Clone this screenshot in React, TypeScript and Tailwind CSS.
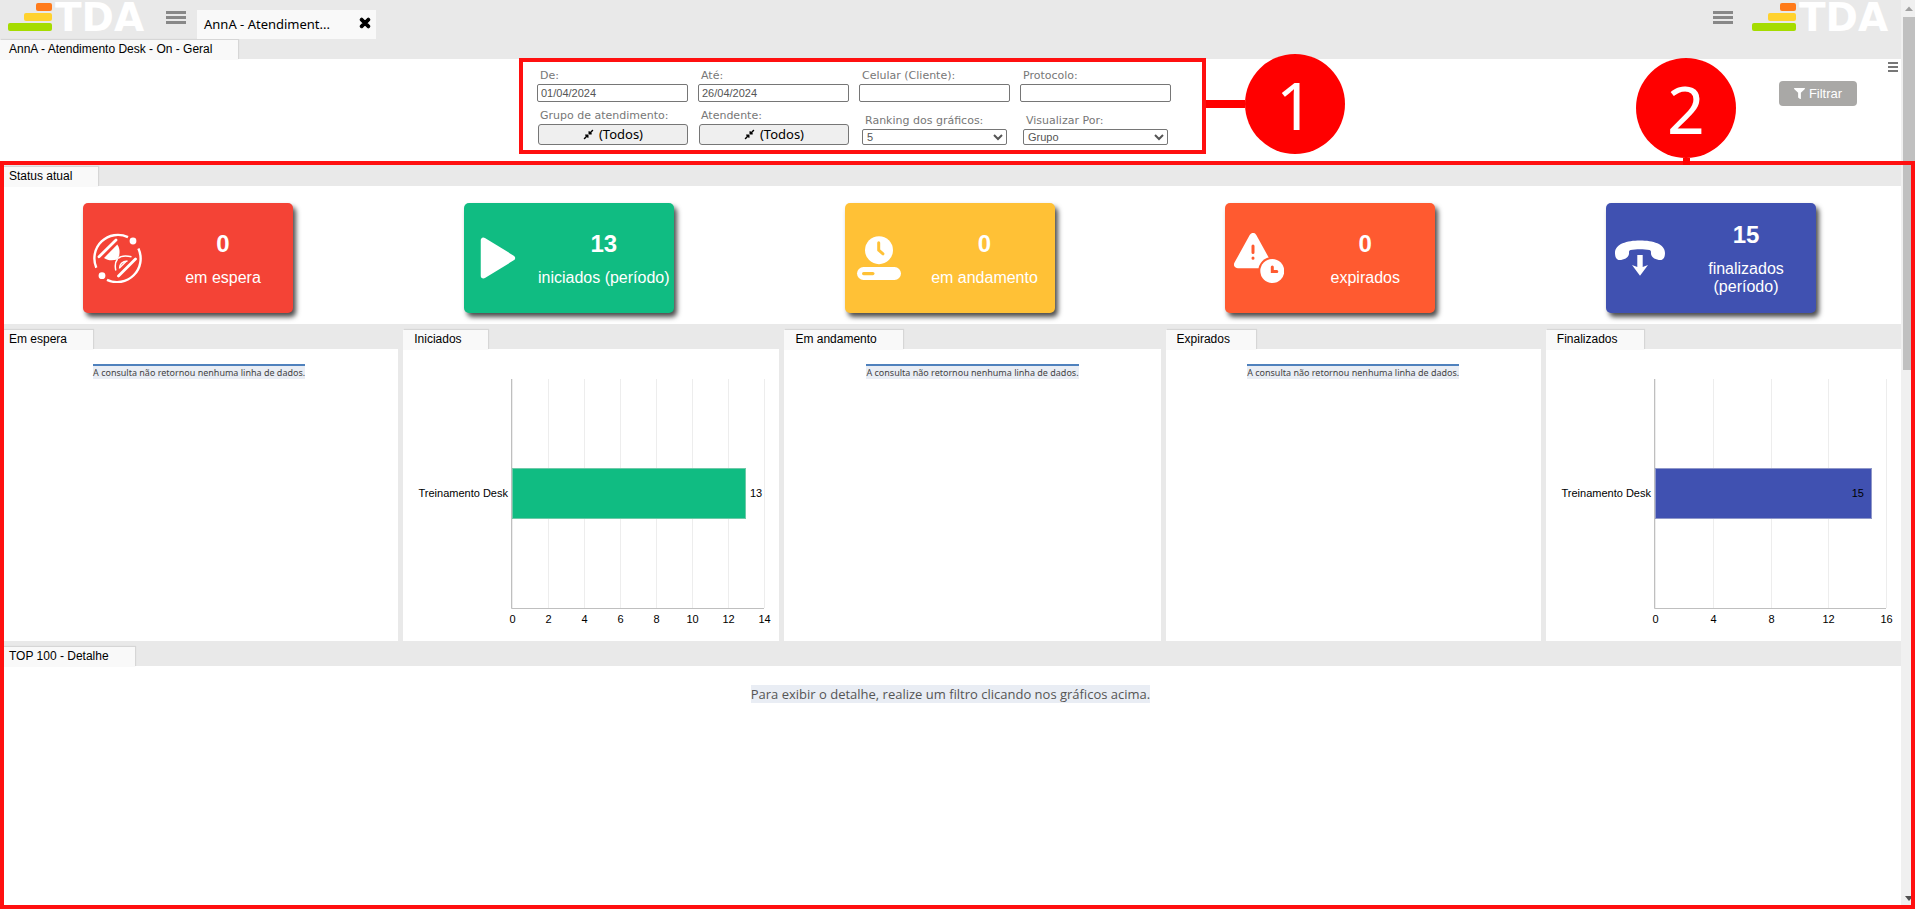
import { useState } from 'react'
import type { ReactNode } from 'react'
import { FaCompressAlt, FaFilter, FaTimes } from 'react-icons/fa'

type StatusCard = {
  value: number
  label: string
  color: string
  icon: ReactNode
}

type ChartData = {
  category: string
  value: number
  max: number
  step: number
  width: number
  color: string
  stroke: string
  labelInside?: boolean
}

type Panel = {
  title: string
  chart?: ChartData
}

const FIELD_LABEL = "pl-[3px] font-['DejaVu_Sans',sans-serif] text-[11px] leading-[15px] text-[#777]"

const STATUS_CARDS: StatusCard[] = [
  { value: 0, label: 'em espera', color: 'bg-[#f44336]', icon: <HourglassIcon /> },
  { value: 13, label: 'iniciados (período)', color: 'bg-[#10bc82]', icon: <PlayIcon /> },
  { value: 0, label: 'em andamento', color: 'bg-[#ffc136]', icon: <ProgressIcon /> },
  { value: 0, label: 'expirados', color: 'bg-[#ff5a30]', icon: <ExpiredIcon /> },
  { value: 15, label: 'finalizados (período)', color: 'bg-[#4051b1]', icon: <HangUpIcon /> },
]

const PANELS: Panel[] = [
  { title: 'Em espera' },
  {
    title: 'Iniciados',
    chart: { category: 'Treinamento Desk', value: 13, max: 14, step: 2, width: 252, color: '#10bc82', stroke: '#6fc9a8' },
  },
  { title: 'Em andamento' },
  { title: 'Expirados' },
  {
    title: 'Finalizados',
    chart: { category: 'Treinamento Desk', value: 15, max: 16, step: 4, width: 231, color: '#4051b1', stroke: '#8f97c9', labelInside: true },
  },
]

function HourglassIcon() {
  return (
    <svg viewBox="0 0 50 50" className="h-[50px] w-[50px]" fill="none" stroke="#fff">
      <path d="M4.3 34.7A23.5 23.5 0 0 1 36 4.2" strokeWidth="2.4" />
      <path d="M46.4 15.6A23.5 23.5 0 0 1 15 46.8" strokeWidth="2.4" />
      <circle cx="41" cy="8" r="3.4" fill="#fff" stroke="none" />
      <circle cx="10" cy="42.7" r="3.4" fill="#fff" stroke="none" />
      <path d="M7 23.8 24 7M26.5 43 43.5 26" strokeWidth="2.8" strokeLinecap="round" />
      <path d="M25.3 11.5C27.5 14.5 28 18.5 27.2 22.5L25.5 26.5C21 27.5 16 28 12 25Z" fill="#fff" stroke="none" />
      <path d="M26 25.5C29 22.5 34 22.5 39.5 23.7M25.5 26C22.8 29.5 22.8 33 23.8 37.5" strokeWidth="1.5" />
      <path d="M27.5 35.5C27.5 31.5 30.5 28.5 35.5 28" strokeWidth="1.4" />
      <path d="M28 34.5 34 28.5" strokeWidth="1.2" />
    </svg>
  )
}

function PlayIcon() {
  return (
    <svg viewBox="0 0 50 50" className="h-[50px] w-[50px]">
      <path d="M10.5 7.3V42.7L39.3 25Z" fill="#fff" stroke="#fff" strokeWidth="5.5" strokeLinejoin="round" />
    </svg>
  )
}

function ProgressIcon() {
  return (
    <svg viewBox="0 0 50 50" className="h-[50px] w-[50px]">
      <circle cx="25" cy="17.2" r="14" fill="#fff" />
      <path d="M24.7 9.8V17.2L29 20.8" fill="none" stroke="#ffc136" strokeWidth="3" strokeLinecap="round" strokeLinejoin="round" />
      <rect x="3" y="34" width="44" height="13" rx="6.5" fill="#fff" />
      <rect x="8" y="39" width="12.5" height="3.2" rx="1.6" fill="#ffc136" />
    </svg>
  )
}

function ExpiredIcon() {
  return (
    <svg viewBox="0 0 50 50" className="h-[50px] w-[50px]">
      <path d="M19 3.8 3.8 31.4H34.2Z" fill="#fff" stroke="#fff" strokeWidth="7.5" strokeLinejoin="round" />
      <path d="M19 13V19.5M19 25V25.2" stroke="#ff5a30" strokeWidth="3" strokeLinecap="round" />
      <circle cx="38.3" cy="38" r="14" fill="#ff5a30" />
      <circle cx="38.3" cy="38" r="12" fill="#fff" />
      <path d="M38.3 34V38.5H42.8" fill="none" stroke="#ff5a30" strokeWidth="3" strokeLinecap="round" />
    </svg>
  )
}

function HangUpIcon() {
  return (
    <svg viewBox="0 0 50 50" className="h-[50px] w-[50px]" fill="#fff">
      <path d="M0 20C0 11 12 7.6 25 7.6S50 11 50 20C50 24 48.5 27 45.5 27C41 27 36 24.5 36 20.5C36 18 36 17.5 34.5 17C29 16 21 16 15.5 17C14 17.5 14 18 14 20.5C14 24.5 9 27 4.5 27C1.5 27 0 24 0 20Z" />
      <path d="M22.3 22H27.7V34L33 32 25 42.7 17 32 22.3 34Z" />
    </svg>
  )
}

function Logo() {
  return (
    <svg width="138" height="42" viewBox="0 0 138 42" role="img" aria-label="TDA">
      <rect x="28" y="3" width="16" height="8" rx="2" fill="#ff7a1a" />
      <rect x="16" y="13" width="28" height="8" rx="2" fill="#ffd22e" />
      <rect y="23" width="44" height="8" rx="2" fill="#a5dc00" />
      <text x="47" y="31" fill="#fff" fontSize="39" fontWeight="700" fontFamily="'DejaVu Sans', sans-serif">
        TDA
      </text>
    </svg>
  )
}

function MenuButton() {
  return (
    <button type="button" aria-label="Menu" className="flex h-[13px] w-5 flex-col justify-between">
      <span className="h-[3px] w-full bg-[#888]" />
      <span className="h-[3px] w-full bg-[#888]" />
      <span className="h-[3px] w-full bg-[#888]" />
    </button>
  )
}

function TabStrip({ title, indent = 'pl-[9px]' }: { title: string; indent?: string }) {
  return (
    <div className="flex h-[25px] bg-[#e9e9e9] pt-[6px]">
      <h2 className={`h-5 bg-[#f9f9f9] pr-[26px] text-xs leading-[18px] text-black shadow-[1px_-1px_1px_rgba(0,0,0,0.08)] ${indent}`}>
        {title}
      </h2>
    </div>
  )
}

function BarChart({ chart }: { chart: ChartData }) {
  const { category, value, max, step, width, color, stroke, labelInside } = chart
  const left = 109
  const ticks = Array.from({ length: max / step + 1 }, (_, i) => i * step)
  const barWidth = Math.round((value / max) * width)

  return (
    <svg width={left + width + 14} height="292" fontSize="11" role="img" aria-label={`${category}: ${value}`}>
      {ticks.map((t) => {
        const x = left + Math.round((t / max) * width)
        return (
          <g key={t}>
            <line x1={x + 0.5} y1="30" x2={x + 0.5} y2="259" stroke="#ededed" />
            <text x={x + 0.5} y="274" textAnchor="middle">{t}</text>
          </g>
        )
      })}
      <path d={`M${left - 0.5} 30V259.5H${left + width}`} fill="none" stroke="#bfbfbf" />
      <rect x={left + 0.5} y="119.5" width={barWidth - 1} height="50" fill={color} stroke={stroke} />
      <text x={left - 4} y="148" textAnchor="end">{category}</text>
      <text x={left + barWidth + (labelInside ? -8 : 4)} y="148" textAnchor={labelInside ? 'end' : 'start'}>
        {value}
      </text>
    </svg>
  )
}

function Marker({ children }: { children: ReactNode }) {
  return (
    <span className="flex h-[100px] w-[100px] items-center justify-center rounded-full bg-[#f00] font-['Noto_Sans',sans-serif] text-[66px] leading-none text-white">
      {children}
    </span>
  )
}

export default function App() {
  const [from, setFrom] = useState('01/04/2024')
  const [to, setTo] = useState('26/04/2024')
  const [phone, setPhone] = useState('')
  const [protocol, setProtocol] = useState('')

  const fields = [
    { id: 'de', label: 'De:', value: from, onChange: setFrom },
    { id: 'ate', label: 'Até:', value: to, onChange: setTo },
    { id: 'celular', label: 'Celular (Cliente):', value: phone, onChange: setPhone },
    { id: 'protocolo', label: 'Protocolo:', value: protocol, onChange: setProtocol },
  ]

  return (
    <div className="relative flex min-h-screen bg-white font-['Liberation_Sans',Arial,sans-serif] text-black">
      <div className="flex min-w-0 flex-1 flex-col">
        {/* Header */}
        <header className="flex h-[34px] items-start justify-between bg-[#e9e9e9] pr-[11px] pl-2">
          <div className="flex items-start">
            <Logo />
            <div className="pt-[11px] pr-[11px] pl-5">
              <MenuButton />
            </div>
            <div className="z-10 mt-[10px] flex h-[29px] w-[179px] items-center justify-between bg-[#f9f9f9] pr-[5px] pl-[7px] font-['Noto_Sans',sans-serif] text-[13px]">
              <span>AnnA - Atendiment...</span>
              <button type="button" aria-label="Fechar" className="pb-1">
                <FaTimes className="h-[14px] w-3" stroke="currentColor" strokeWidth={40} />
              </button>
            </div>
          </div>
          <div className="flex items-start gap-[19px]">
            <div className="pt-[11px]">
              <MenuButton />
            </div>
            <Logo />
          </div>
        </header>
        <TabStrip title="AnnA - Atendimento Desk - On - Geral" />

        {/* Filters */}
        <div className="flex h-[102px] items-start justify-between">
          <form
            className="relative -mt-px ml-[519px] h-24 w-[687px] border-4 border-[#ff1010] pt-[6px] pl-[14px]"
            onSubmit={(e) => e.preventDefault()}
          >
            <div className="flex gap-[10px]">
              {fields.map((f) => (
                <div key={f.id} className="flex w-[151px] flex-col gap-px">
                  <label htmlFor={f.id} className={FIELD_LABEL}>{f.label}</label>
                  <input
                    id={f.id}
                    type="text"
                    value={f.value}
                    onChange={(e) => f.onChange(e.target.value)}
                    className="h-[18px] rounded-[2px] border border-[#767676] px-[3px] text-[11px] text-[#555] outline-none"
                  />
                </div>
              ))}
            </div>
            <div className="mt-[6px] flex gap-[10px]">
              {['Grupo de atendimento:', 'Atendente:'].map((label, i) => (
                <div key={label} className="flex w-[151px] flex-col gap-px">
                  <label htmlFor={`todos-${i}`} className={FIELD_LABEL}>{label}</label>
                  <button
                    id={`todos-${i}`}
                    type="button"
                    className="ml-px flex h-[21px] items-center justify-center gap-[5px] rounded-[3px] border border-[#767676] bg-[#efefef] font-['Noto_Sans',sans-serif] text-[13px] leading-none"
                  >
                    <FaCompressAlt className="h-[11px] w-[11px]" />
                    (Todos)
                  </button>
                </div>
              ))}
              <div className="flex w-[151px] flex-col gap-px px-[3px] pt-[5px]">
                <label htmlFor="ranking" className={FIELD_LABEL}>Ranking dos gráficos:</label>
                <select id="ranking" defaultValue="5" className="h-4 rounded-[2px] border border-[#767676] text-[11px] text-[#555]">
                  <option>5</option>
                  <option>10</option>
                </select>
              </div>
              <div className="flex w-[151px] flex-col gap-px px-[3px] pt-[5px]">
                <label htmlFor="visualizar" className={FIELD_LABEL}>Visualizar Por:</label>
                <select id="visualizar" defaultValue="Grupo" className="h-4 rounded-[2px] border border-[#767676] text-[11px] text-[#555]">
                  <option>Grupo</option>
                  <option>Atendente</option>
                </select>
              </div>
            </div>

            {/* Callout 1 */}
            <div className="absolute top-[-8px] left-full ml-1 flex items-center">
              <span className="h-2 w-[39px] bg-[#f00]" />
              <Marker>1</Marker>
            </div>
          </form>

          <div className="flex items-start gap-[31px] pr-[3px]">
            <button type="button" className="mt-[22px] flex h-[25px] w-[78px] items-center justify-center gap-1 rounded bg-[#a9a8a6] text-[13px] text-white">
              <FaFilter className="h-[11px] w-[11px]" />
              Filtrar
            </button>
            <button type="button" aria-label="Opções" className="mt-[3px] flex w-[10px] flex-col gap-[2px]">
              <span className="h-[2px] w-full bg-[#777]" />
              <span className="h-[2px] w-full bg-[#777]" />
              <span className="h-[2px] w-full bg-[#777]" />
            </button>
          </div>
        </div>

        {/* Status */}
        <TabStrip title="Status atual" />
        <div className="flex justify-between pt-[17px] pr-[85px] pb-[11px] pl-[83px]">
          {STATUS_CARDS.map((card) => (
            <div
              key={card.label}
              className={`flex h-[110px] w-[210px] items-center rounded-[5px] text-white shadow-[3px_4px_5px_rgba(0,0,0,0.7)] ${card.color}`}
            >
              <div className="w-[70px] shrink-0 pl-[9px]">{card.icon}</div>
              <div className="flex flex-1 flex-col gap-[11px] text-center">
                <strong className="text-2xl leading-7">{card.value}</strong>
                <span className="text-base leading-[18px]">{card.label}</span>
              </div>
            </div>
          ))}
        </div>

        {/* Charts */}
        <div className="grid grid-cols-[398fr_376fr_376fr_375fr_355fr] gap-x-[5px] bg-[#e9e9e9]">
          {PANELS.map((panel, i) => (
            <section key={panel.title} className="min-w-0">
              <TabStrip title={panel.title} indent={i === 0 ? 'pl-[9px]' : 'pl-[11px]'} />
              <div className="h-[292px] overflow-hidden bg-white">
                {panel.chart ? (
                  <BarChart chart={panel.chart} />
                ) : (
                  <div className="flex justify-center pt-[15px]">
                    <p className="border-t-2 border-[#4f81bd] bg-[#e9edf4] font-['Noto_Sans',sans-serif] text-[9px] leading-[13px] text-[#444]">
                      A consulta não retornou nenhuma linha de dados.
                    </p>
                  </div>
                )}
              </div>
            </section>
          ))}
        </div>

        {/* Detail */}
        <TabStrip title="TOP 100 - Detalhe" />
        <div className="flex justify-center pt-[19px]">
          <p className="bg-[#e9edf4] font-['Open_Sans',sans-serif] text-[13px] leading-[18px] text-[#555]">
            Para exibir o detalhe, realize um filtro clicando nos gráficos acima.
          </p>
        </div>
      </div>

      {/* Scrollbar */}
      <div className="flex w-[14px] flex-col items-end justify-between bg-[#f0f0f0] pb-2">
        <div className="flex w-3 flex-col items-center">
          <svg width="8" height="17" fill="#a0a0a0">
            <path d="M0 11 4 6.5 8 11Z" />
          </svg>
          <div className="h-[353px] w-full bg-[#c0c0c0]" />
        </div>
        <svg width="10" height="5" fill="#505050">
          <path d="M0 0H8L4 5Z" />
        </svg>
      </div>

      {/* Callout 2 */}
      <div className="pointer-events-none absolute inset-x-0 top-[161px] bottom-0 border-4 border-[#ff1010]">
        <div className="absolute right-[175px] bottom-full flex flex-col items-center">
          <Marker>2</Marker>
          <span className="h-[7px] w-[7px] bg-[#f00]" />
        </div>
      </div>
    </div>
  )
}
